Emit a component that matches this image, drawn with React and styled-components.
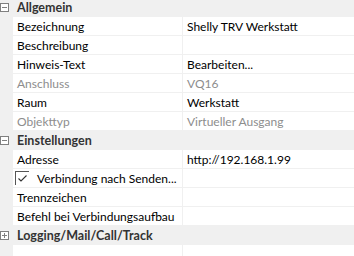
import styled, { createGlobalStyle } from 'styled-components';

const GlobalStyle = createGlobalStyle`
  html, body {
    margin: 0;
    padding: 0;
    background: #ffffff;
  }
  body {
    font-family: Lato, "Noto Sans", "Liberation Sans", sans-serif;
    font-size: 12px;
  }
`;

const palette = {
  band: '#f0f0f0',
  line: '#f0f0f0',
  text: '#000000',
  heading: '#333333',
  muted: '#8d8d8d',
  glyph: '#808080',
};

const GridFrame = styled.div`
  width: 354px;
  height: 256px;
  overflow: hidden;
  background: #ffffff;
`;

const GridBody = styled.div`
  display: flex;
  flex-direction: column;
  height: 258px;
  margin-top: -2px;
`;

const CategoryRow = styled.div`
  display: grid;
  grid-template-columns: 13px 1fr;
  align-items: center;
  height: 19px;
  flex: none;
  background: ${palette.band};
`;

const CategoryTitle = styled.div`
  padding-left: 4px;
  font-weight: 700;
  font-size: 12.5px;
  color: ${palette.heading};
  white-space: nowrap;
`;

const ExpandBox = styled.span`
  display: flex;
  align-items: center;
  justify-content: center;
  width: 9px;
  height: 9px;
  box-sizing: border-box;
  border: 1px solid ${palette.glyph};
  background: #ffffff;
  position: relative;
  &::before {
    content: '';
    width: 5px;
    height: 1px;
    background: ${palette.glyph};
  }
  &::after {
    content: '';
    display: ${(p) => (p.$open ? 'none' : 'block')};
    position: absolute;
    width: 1px;
    height: 5px;
    background: ${palette.glyph};
  }
`;

const PropRow = styled.div`
  display: grid;
  grid-template-columns: 13px 170px 1fr;
  height: 19px;
  flex: none;
`;

const Margin = styled.div`
  background: ${palette.band};
`;

const NameCell = styled.div`
  display: flex;
  align-items: center;
  gap: 8px;
  padding-left: 4px;
  border-right: 1px solid ${palette.line};
  border-bottom: 1px solid ${palette.line};
  color: ${(p) => (p.$disabled ? palette.muted : palette.text)};
  white-space: nowrap;
  overflow: hidden;
`;

const ValueCell = styled.div`
  display: flex;
  align-items: center;
  padding-left: 4px;
  border-bottom: 1px solid ${palette.line};
  color: ${(p) => (p.$disabled ? palette.muted : palette.text)};
  white-space: nowrap;
  overflow: hidden;
`;

const Check = styled.span`
  flex: none;
  width: 14px;
  height: 14px;
  margin-left: -2px;
  box-sizing: border-box;
  border-top: 1px solid #555555;
  border-left: 1px solid #555555;
  display: flex;
  align-items: center;
  justify-content: center;
`;

const Filler = styled.div`
  flex: 1;
  display: grid;
  grid-template-columns: 13px 170px 1fr;
`;

const FillerName = styled.div`
  border-right: 1px solid ${palette.line};
`;

const groups = [
  {
    title: 'Allgemein',
    open: true,
    rows: [
      { name: 'Bezeichnung', value: 'Shelly TRV Werkstatt' },
      { name: 'Beschreibung', value: '' },
      { name: 'Hinweis-Text', value: 'Bearbeiten...' },
      { name: 'Anschluss', value: 'VQ16', disabled: true },
      { name: 'Raum', value: 'Werkstatt' },
      { name: 'Objekttyp', value: 'Virtueller Ausgang', disabled: true },
    ],
  },
  {
    title: 'Einstellungen',
    open: true,
    rows: [
      { name: 'Adresse', value: 'http://192.168.1.99' },
      { name: 'Verbindung nach Senden...', value: '', checked: true },
      { name: 'Trennzeichen', value: '' },
      { name: 'Befehl bei Verbindungsaufbau', value: '' },
    ],
  },
  { title: 'Logging/Mail/Call/Track', open: false, rows: [] },
];

const CheckMark = () => (
  <Check>
    <svg width="9" height="7" viewBox="0 0 9 7">
      <path d="M0.5 3.5 L3 6 L8.5 0.5" fill="none" stroke="#333" strokeWidth="1.1" />
    </svg>
  </Check>
);

const App = () => {
  return (
    <GridFrame>
      <GlobalStyle />
      <GridBody>
        {groups.map((g) => (
          <div key={g.title} style={{ display: 'contents' }}>
            <CategoryRow>
              <ExpandBox $open={g.open} />
              <CategoryTitle>{g.title}</CategoryTitle>
            </CategoryRow>
            {g.open &&
              g.rows.map((r) => (
                <PropRow key={r.name}>
                  <Margin />
                  <NameCell $disabled={r.disabled}>
                    {r.checked && <CheckMark />}
                    {r.name}
                  </NameCell>
                  <ValueCell $disabled={r.disabled}>{r.value}</ValueCell>
                </PropRow>
              ))}
          </div>
        ))}
        <Filler>
          <Margin />
          <FillerName />
          <div />
        </Filler>
      </GridBody>
    </GridFrame>
  );
};

export default App;
